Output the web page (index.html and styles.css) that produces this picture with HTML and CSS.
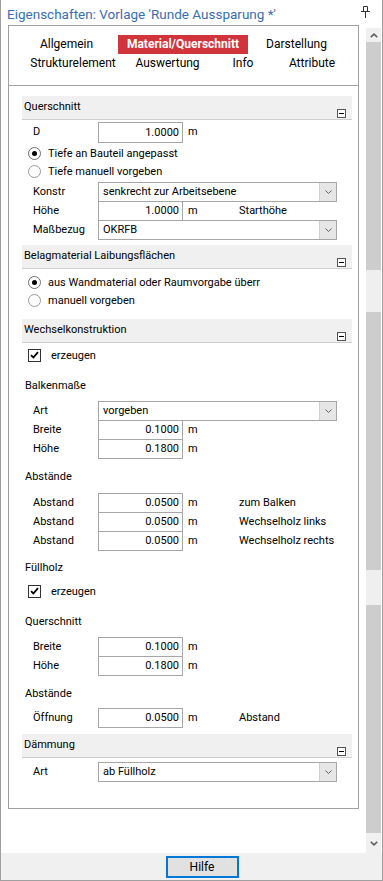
FILE: index.html
```html
<!DOCTYPE html>
<html lang="de">
<head>
<meta charset="utf-8">
<title>Eigenschaften</title>
<link rel="stylesheet" href="styles.css">
</head>
<body>
<div class="window">
  <div class="titlebar">
    <span class="title">Eigenschaften: Vorlage 'Runde Aussparung *'</span>
    <svg class="pin" width="9" height="12" viewBox="0 0 9 12"><path d="M2.5 0.5h4v5h-4z M0 5.5h9 M4.5 6v6" fill="none" stroke="#333" stroke-width="1"/></svg>
  </div>
  <div class="main">
    <div class="panel">
      <div class="tabs">
        <div class="tabrow">
          <span class="tab t-allg">Allgemein</span>
          <span class="tab t-mat active">Material/Querschnitt</span>
          <span class="tab t-dar">Darstellung</span>
        </div>
        <div class="tabrow">
          <span class="tab t-str">Strukturelement</span>
          <span class="tab t-aus">Auswertung</span>
          <span class="tab t-info">Info</span>
          <span class="tab t-attr">Attribute</span>
        </div>
      </div>
      <div class="content">
        <section class="sec sec-quer">
          <div class="head"><span>Querschnitt</span><span class="collapse"></span></div>
          <div class="row row-d"><span class="lbl">D</span><span class="num tall">1.0000</span><span class="unit">m</span></div>
          <div class="radio-group">
            <div class="opt"><span class="radio on"></span><span>Tiefe an Bauteil angepasst</span></div>
            <div class="opt"><span class="radio"></span><span>Tiefe manuell vorgeben</span></div>
          </div>
          <div class="stack">
            <div class="row"><span class="lbl">Konstr</span><span class="combo"><span class="val">senkrecht zur Arbeitsebene</span><span class="btn"><svg width="7" height="4" viewBox="0 0 7 4"><path d="M0.5 0.5L3.5 3.5L6.5 0.5" fill="none" stroke="#606060"/></svg></span></span></div>
            <div class="row"><span class="lbl">Höhe</span><span class="num">1.0000</span><span class="unit">m</span><span class="note">Starthöhe</span></div>
            <div class="row"><span class="lbl">Maßbezug</span><span class="combo"><span class="val">OKRFB</span><span class="btn"><svg width="7" height="4" viewBox="0 0 7 4"><path d="M0.5 0.5L3.5 3.5L6.5 0.5" fill="none" stroke="#606060"/></svg></span></span></div>
          </div>
        </section>

        <section class="sec sec-belag">
          <div class="head"><span>Belagmaterial Laibungsflächen</span><span class="collapse"></span></div>
          <div class="radio-group">
            <div class="opt"><span class="radio on"></span><span>aus Wandmaterial oder Raumvorgabe überr</span></div>
            <div class="opt"><span class="radio"></span><span>manuell vorgeben</span></div>
          </div>
        </section>

        <section class="sec sec-wechsel">
          <div class="head"><span>Wechselkonstruktion</span><span class="collapse"></span></div>
          <div class="check-row"><span class="check"><svg width="9" height="8" viewBox="0 0 9 8"><path d="M1 4.2L3.4 6.5L8 1.2" fill="none" stroke="#000" stroke-width="1.8"/></svg></span><span>erzeugen</span></div>

          <div class="sub sub-balken">Balkenmaße</div>
          <div class="stack stack-balken">
            <div class="row"><span class="lbl">Art</span><span class="combo"><span class="val">vorgeben</span><span class="btn"><svg width="7" height="4" viewBox="0 0 7 4"><path d="M0.5 0.5L3.5 3.5L6.5 0.5" fill="none" stroke="#606060"/></svg></span></span></div>
            <div class="row"><span class="lbl">Breite</span><span class="num">0.1000</span><span class="unit">m</span></div>
            <div class="row"><span class="lbl">Höhe</span><span class="num">0.1800</span><span class="unit">m</span></div>
          </div>

          <div class="sub sub-abst">Abstände</div>
          <div class="stack stack-abst">
            <div class="row"><span class="lbl">Abstand</span><span class="num">0.0500</span><span class="unit">m</span><span class="note">zum Balken</span></div>
            <div class="row"><span class="lbl">Abstand</span><span class="num">0.0500</span><span class="unit">m</span><span class="note">Wechselholz links</span></div>
            <div class="row"><span class="lbl">Abstand</span><span class="num">0.0500</span><span class="unit">m</span><span class="note">Wechselholz rechts</span></div>
          </div>

          <div class="sub sub-fuell">Füllholz</div>
          <div class="check-row check-fuell"><span class="check"><svg width="9" height="8" viewBox="0 0 9 8"><path d="M1 4.2L3.4 6.5L8 1.2" fill="none" stroke="#000" stroke-width="1.8"/></svg></span><span>erzeugen</span></div>

          <div class="sub sub-quer">Querschnitt</div>
          <div class="stack stack-fq">
            <div class="row"><span class="lbl">Breite</span><span class="num">0.1000</span><span class="unit">m</span></div>
            <div class="row"><span class="lbl">Höhe</span><span class="num">0.1800</span><span class="unit">m</span></div>
          </div>

          <div class="sub sub-abst2">Abstände</div>
          <div class="stack stack-oeff">
            <div class="row"><span class="lbl">Öffnung</span><span class="num">0.0500</span><span class="unit">m</span><span class="note">Abstand</span></div>
          </div>
        </section>

        <section class="sec sec-daemm">
          <div class="head"><span>Dämmung</span><span class="collapse"></span></div>
          <div class="stack stack-daemm">
            <div class="row"><span class="lbl">Art</span><span class="combo"><span class="val">ab Füllholz</span><span class="btn"><svg width="7" height="4" viewBox="0 0 7 4"><path d="M0.5 0.5L3.5 3.5L6.5 0.5" fill="none" stroke="#606060"/></svg></span></span></div>
          </div>
        </section>
      </div>
    </div>
    <div class="scrollbar">
      <div class="arrow"><svg width="8" height="5" viewBox="0 0 8 5"><path d="M0.8 4.2L4 1.2L7.2 4.2" fill="none" stroke="#606060" stroke-width="1.6"/></svg></div>
      <div class="thumb th1"></div>
      <div class="gapband g1"></div>
      <div class="thumb th2"></div>
      <div class="gapband g2"></div>
      <div class="thumb th3"></div>
      <div class="arrow down"><svg width="8" height="5" viewBox="0 0 8 5"><path d="M0.8 0.8L4 3.8L7.2 0.8" fill="none" stroke="#606060" stroke-width="1.6"/></svg></div>
    </div>
  </div>
  <div class="footer">
    <button class="help" type="button">Hilfe</button>
  </div>
</div>
</body>
</html>
```
FILE: styles.css
```css
* { box-sizing: border-box; }
html, body { margin: 0; padding: 0; background: #fff; }
body {
  font-family: Roboto, "Noto Sans", sans-serif;
  font-size: 11px;
  color: #000;
}
.window {
  width: 383px;
  height: 881px;
  border-left: 1px solid #a0a0a0;
  border-right: 1px solid #a0a0a0;
  border-bottom: 1px solid #a0a0a0;
  display: flex;
  flex-direction: column;
  background: #fff;
}
.titlebar {
  height: 25px;
  display: flex;
  align-items: center;
  padding-left: 6px;
}
.title {
  color: #3a6db3;
  font-size: 13.5px;
  line-height: 18px;
  white-space: nowrap;
  margin-top: 2px;
}
.pin { margin-left: auto; margin-right: 12px; margin-top: -2px; }

.main {
  height: 828px;
  display: flex;
  align-items: flex-start;
}
.panel {
  margin-left: 7px;
  width: 351px;
  height: 784px;
  border: 1px solid #a0a0a0;
}
.tabs {
  height: 60px;
  border-bottom: 1px solid #a0a0a0;
  padding-top: 9px;
}
.tabrow {
  display: flex;
  height: 19px;
}
.tab {
  display: block;
  text-align: center;
  line-height: 19px;
  height: 19px;
  white-space: nowrap;
  font-size: 12px;
}
.tab.active {
  background: #d1343a;
  color: #fff;
  font-weight: bold;
}
.t-allg { margin-left: 27px; width: 61px; }
.t-mat { margin-left: 21px; width: 130px; }
.t-dar { margin-left: 16px; width: 65px; }
.t-str { margin-left: 18px; width: 92px; }
.t-aus { margin-left: 15px; width: 67px; }
.t-info { margin-left: 27px; width: 30px; }
.t-attr { margin-left: 26px; width: 56px; }

.content {
  padding: 10px 6px 0 13px;
}
.sec { display: flex; flex-direction: column; }
.head {
  height: 24px;
  background: #f0f0f0;
  border-bottom: 1px solid #cfcfcf;
  display: flex;
  align-items: flex-start;
  padding-left: 2px;
  padding-top: 3px;
  padding-right: 6px;
  line-height: 16px;
}
.collapse {
  margin-left: auto;
  margin-top: 10px;
  width: 9px;
  height: 9px;
  border: 1px solid #555;
  background: #fff;
  display: flex;
  align-items: center;
  justify-content: center;
}
.collapse::after {
  content: "";
  width: 5px;
  height: 1px;
  background: #000;
}

.row {
  display: flex;
  align-items: flex-start;
  height: 19px;
  line-height: 19px;
}
.lbl {
  width: 76px;
  padding-left: 11px;
  white-space: nowrap;
}
.num {
  width: 85px;
  height: 20px;
  border: 1px solid #a6a6a6;
  text-align: right;
  padding-right: 3px;
  line-height: 18px;
  background: #fff;
}
.num.tall { height: 21px; line-height: 19px; }
.unit {
  width: 56px;
  padding-left: 5px;
}
.note { white-space: nowrap; }
.combo {
  width: 239px;
  height: 20px;
  border: 1px solid #a6a6a6;
  display: flex;
  background: #fff;
}
.combo .val {
  flex: 1;
  padding-left: 4px;
  line-height: 18px;
  white-space: nowrap;
}
.combo .btn {
  width: 17px;
  background: #e6e6e6;
  border-left: 1px solid #cfcfcf;
  display: flex;
  align-items: center;
  justify-content: center;
}

.row-d { height: 22px; margin-top: 2px; }

.radio-group { display: flex; flex-direction: column; }
.opt {
  height: 18px;
  display: flex;
  align-items: center;
  padding-left: 6px;
  white-space: nowrap;
}
.radio {
  width: 13px;
  height: 13px;
  border: 1px solid #9a9a9a;
  border-radius: 50%;
  margin-right: 7px;
  display: flex;
  align-items: center;
  justify-content: center;
  background: #fff;
}
.radio.on { border-color: #6e6e6e; }
.radio.on::after {
  content: "";
  width: 5px;
  height: 5px;
  background: #000;
  border-radius: 50%;
}
.check-row {
  height: 18px;
  display: flex;
  align-items: center;
  padding-left: 6px;
  margin-top: 3px;
}
.check {
  width: 13px;
  height: 13px;
  border: 1px solid #333;
  margin-right: 10px;
  display: flex;
  align-items: center;
  justify-content: center;
}
.sub {
  height: 18px;
  line-height: 19px;
  padding-left: 3px;
}

.sec-quer .stack { margin-top: 2px; }
.sec-quer { margin-bottom: 6px; }
.sec-belag .radio-group { margin-top: 4px; }
.sec-belag { margin-bottom: 10px; }
.sub-balken { margin-top: 12px; }
.stack-balken { margin-top: 7px; }
.sub-abst { margin-top: 9px; }
.stack-abst { margin-top: 8px; }
.sub-fuell { margin-top: 8px; }
.check-fuell { margin-top: 6px; }
.sub-quer { margin-top: 12px; }
.stack-fq { margin-top: 7px; }
.sub-abst2 { margin-top: 9px; }
.stack-oeff { margin-top: 6px; }
.sec-wechsel { margin-bottom: 7px; }
.stack-daemm { margin-top: 4px; }

.scrollbar {
  margin-left: 7px;
  margin-top: 3px;
  width: 15px;
  height: 825px;
  background: #f0f0f0;
  display: flex;
  flex-direction: column;
}
.arrow {
  height: 14px;
  display: flex;
  align-items: center;
  justify-content: center;
}
.arrow.down { height: 20px; margin-top: auto; }
.thumb { background: #cdcdcd; }
.th1 { height: 228px; }
.g1 { height: 42px; }
.th2 { height: 258px; }
.g2 { height: 35px; }
.th3 { height: 228px; }
.gapband { background: #efefef; }

.footer {
  height: 27px;
  background: #f0f0f0;
  display: flex;
  justify-content: center;
  align-items: flex-start;
  padding-top: 3px;
}
.help {
  width: 73px;
  height: 22px;
  border: 2px solid #0078d7;
  background: #e1e1e1;
  font-family: Roboto, "Noto Sans", sans-serif;
  font-size: 12px;
  color: #000;
  padding: 0;
  margin-left: 21px;
  line-height: 16px;
}
```
